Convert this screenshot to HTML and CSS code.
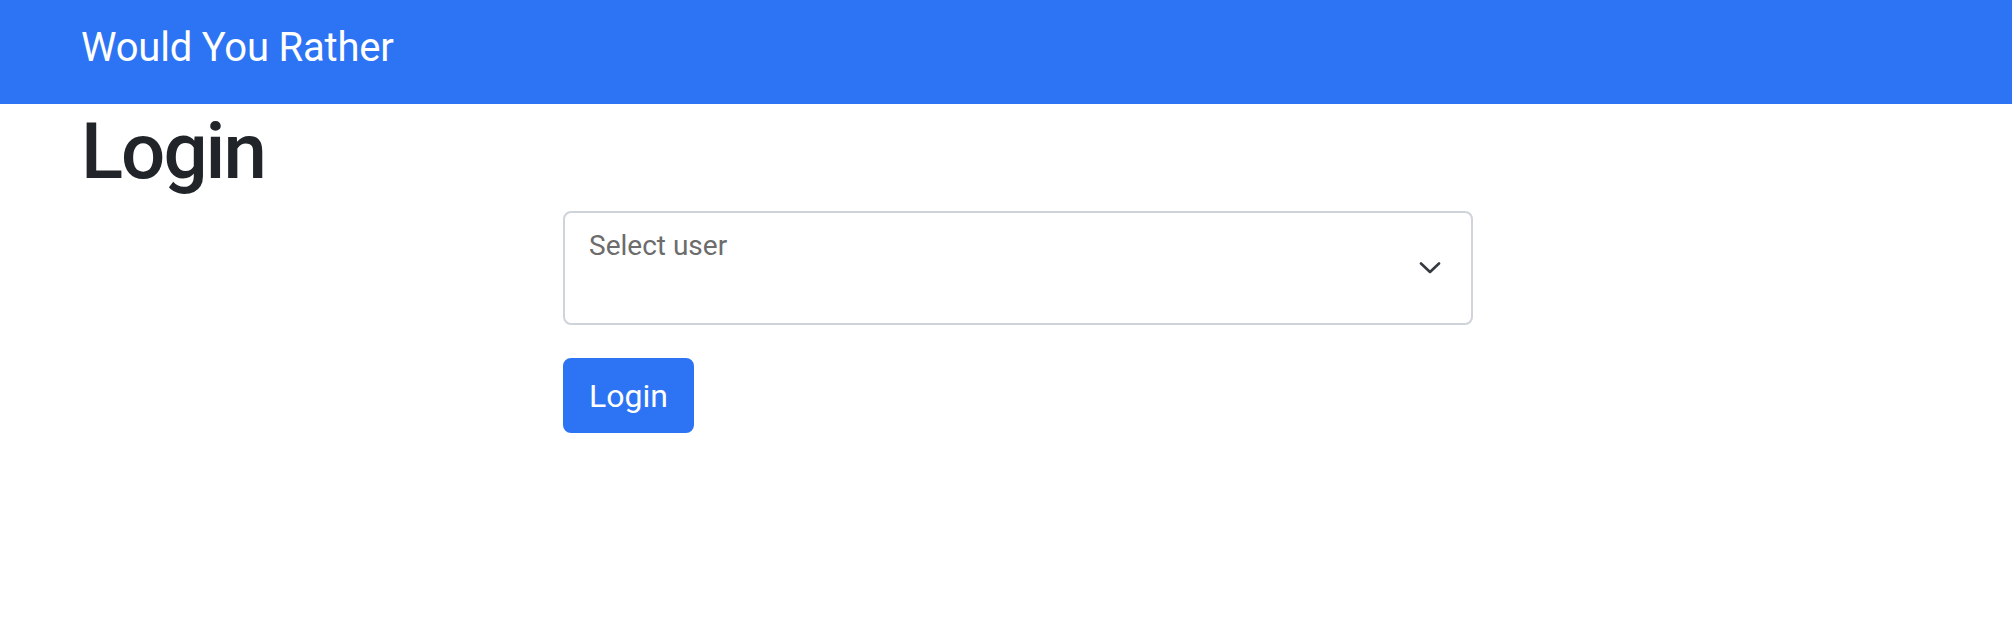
FILE: index.html
```html
<!DOCTYPE html>
<html lang="en">
<head>
<meta charset="utf-8">
<title>Would You Rather</title>
<link rel="stylesheet" href="styles.css">
</head>
<body>
<nav class="navbar">
  <span class="brand">Would You Rather</span>
</nav>
<main class="container">
  <h1 class="page-title">Login</h1>
  <form class="login-form">
    <div class="select-box" role="combobox" aria-expanded="false">
      <span class="select-placeholder">Select user</span>
      <svg class="chevron" width="22" height="12" viewBox="0 0 22 12" aria-hidden="true">
        <path d="M2 1.5 L11 10 L20 1.5" fill="none" stroke="#343a40" stroke-width="2.6" stroke-linecap="round" stroke-linejoin="round"/>
      </svg>
    </div>
    <button type="button" class="btn-primary">Login</button>
  </form>
</main>
</body>
</html>
```

FILE: styles.css
```css
html, body {
  margin: 0;
  padding: 0;
  background: #ffffff;
}

body {
  font-family: Roboto, "Noto Sans", "Liberation Sans", sans-serif;
  color: #212529;
}

.navbar {
  height: 104px;
  box-sizing: border-box;
  background: #2d74f4;
  display: flex;
  align-items: center;
  padding: 0 0 8px 81px;
}

.brand {
  color: #ffffff;
  font-size: 40px;
  line-height: 60px;
  font-weight: 400;
  letter-spacing: -0.2px;
}

.container {
  padding-left: 78px;
}

.page-title {
  margin: 0 0 11px 0;
  padding-left: 3px;
  font-size: 78px;
  line-height: 96px;
  font-weight: 500;
  letter-spacing: -2px;
}

.login-form {
  margin-left: 485px;
  width: 910px;
  display: flex;
  flex-direction: column;
  align-items: flex-start;
  gap: 33px;
}

.select-box {
  box-sizing: border-box;
  width: 100%;
  height: 114px;
  border: 2px solid #ced4da;
  border-radius: 8px;
  display: flex;
  align-items: flex-start;
  justify-content: space-between;
  padding: 12px 30px 12px 24px;
}

.select-placeholder {
  font-size: 28px;
  line-height: 42px;
  color: #6c6c6c;
}

.chevron {
  align-self: center;
}

.btn-primary {
  box-sizing: border-box;
  height: 75px;
  padding: 0 24px;
  background: #2d74f4;
  color: #ffffff;
  border: 2px solid #2d74f4;
  border-radius: 8px;
  font-family: inherit;
  font-size: 32px;
  line-height: 48px;
  font-weight: 400;
}
```
